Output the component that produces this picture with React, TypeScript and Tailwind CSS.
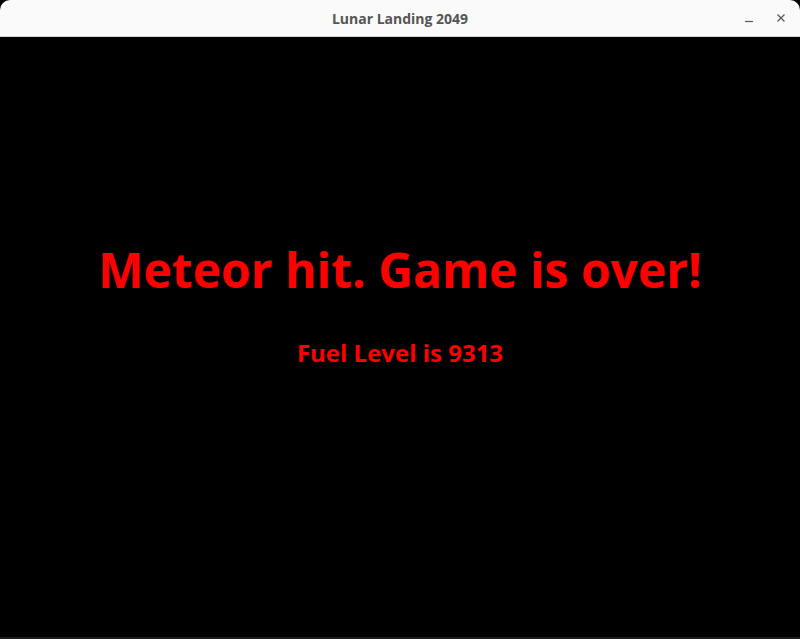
export default function App() {
    return (
        <div className="w-[800px] h-[639px] flex flex-col bg-black overflow-hidden">
            {/* Window title bar */}
            <div className="relative h-[37px] shrink-0 flex items-center justify-center bg-[#fafafa] border-b border-[#d6d6d6] rounded-t-[10px]">
                <span className="text-[14px] font-bold text-[#555555] font-['Open_Sans',sans-serif]">
                    Lunar Landing 2049
                </span>
                <div className="absolute right-[14px] top-0 h-full flex items-center gap-[22px] text-[#555555]">
                    <svg width="10" height="10" viewBox="0 0 10 10">
                        <path d="M1 8.5h8" stroke="currentColor" strokeWidth="1.2" />
                    </svg>
                    <svg width="10" height="10" viewBox="0 0 10 10">
                        <path d="M1.5 1.5l7 7M8.5 1.5l-7 7" stroke="currentColor" strokeWidth="1.2" />
                    </svg>
                </div>
            </div>

            {/* Game over screen */}
            <div className="flex-1 flex flex-col items-center pt-[203px] font-['Open_Sans',sans-serif] text-[#ff0000] font-bold">
                <div className="text-[48px] leading-[60px]">Meteor hit. Game is over!</div>
                <div className="mt-[37px] text-[24px] leading-[32px]">Fuel Level is 9313</div>
            </div>
            <div className="h-[2px] shrink-0 bg-[#1c1c1c]" />
        </div>
    );
}
